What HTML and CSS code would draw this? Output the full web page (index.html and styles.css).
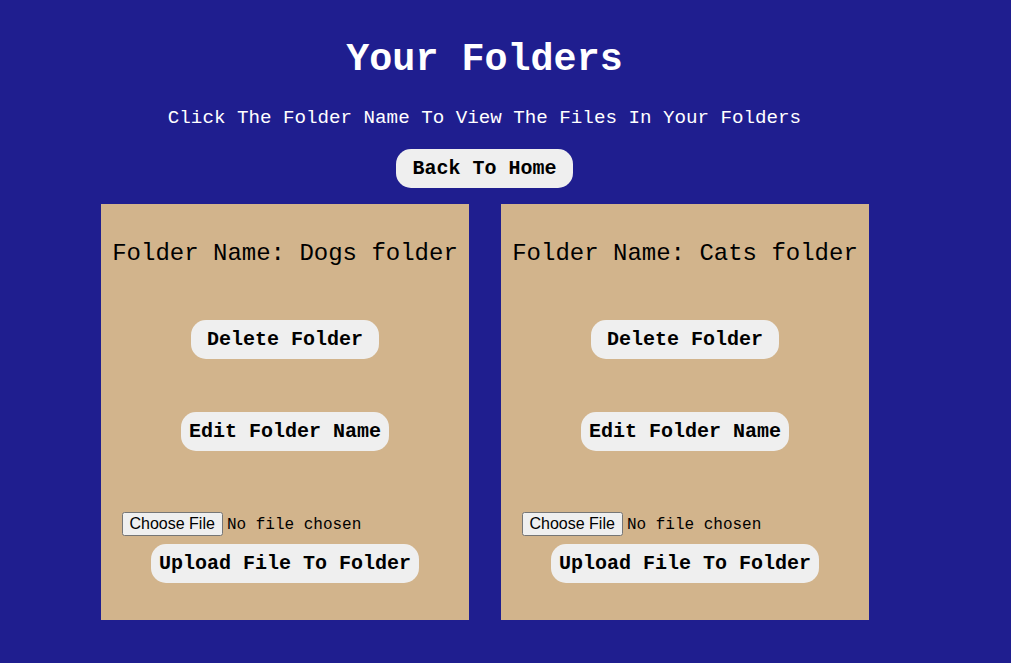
FILE: index.html
```html
<!DOCTYPE html>
<html lang="en">
<head>
<meta charset="utf-8">
<title>Your Folders</title>
<link rel="stylesheet" href="styles.css">
</head>
<body>
<main class="page">
  <header class="header">
    <h1 class="title">Your Folders</h1>
    <p class="subtitle">Click The Folder Name To View The Files In Your Folders</p>
    <button class="btn btn-wide">Back To Home</button>
  </header>
  <section class="folders">
    <div class="card">
      <h2 class="folder-name">Folder Name: Dogs folder</h2>
      <button class="btn btn-wide btn-delete">Delete Folder</button>
      <button class="btn btn-edit">Edit Folder Name</button>
      <div class="upload">
        <input type="file" class="file">
        <button class="btn btn-upload">Upload File To Folder</button>
      </div>
    </div>
    <div class="card">
      <h2 class="folder-name">Folder Name: Cats folder</h2>
      <button class="btn btn-wide btn-delete">Delete Folder</button>
      <button class="btn btn-edit">Edit Folder Name</button>
      <div class="upload">
        <input type="file" class="file">
        <button class="btn btn-upload">Upload File To Folder</button>
      </div>
    </div>
  </section>
</main>
</body>
</html>
```

FILE: styles.css
```css
html, body {
  margin: 0;
  padding: 0;
  background: #1f1e8f;
  font-family: "Liberation Mono", "DejaVu Sans Mono", monospace;
}

.page {
  display: flex;
  flex-direction: column;
  padding-top: 38px;
  min-height: 663px;
  box-sizing: border-box;
}

.header {
  display: flex;
  flex-direction: column;
  align-items: center;
  padding-right: 42px;
}

.title {
  margin: 0;
  font-size: 38.4px;
  font-weight: bold;
  color: #ffffff;
  text-align: center;
}

.subtitle {
  margin: 25px 0 0;
  font-size: 19.2px;
  color: #ffffff;
  text-align: center;
}

.btn {
  font-family: "Liberation Mono", "DejaVu Sans Mono", monospace;
  font-size: 20px;
  font-weight: bold;
  color: #000;
  background: #efefef;
  border: none;
  border-radius: 15px;
  padding: 8px 8px;
  line-height: normal;
  cursor: pointer;
}

.btn-wide {
  padding: 8px 16px;
}

.header .btn {
  margin-top: 20px;
}

.folders {
  display: flex;
  gap: 32px;
  margin-top: 16px;
  padding-left: 101px;
}

.card {
  width: 368px;
  height: 416px;
  box-sizing: border-box;
  background: #d2b48c;
  padding: 36px 12px 0;
  display: flex;
  flex-direction: column;
  align-items: center;
}

.folder-name {
  margin: 0;
  font-size: 24px;
  font-weight: normal;
  color: #000;
  white-space: nowrap;
}

.btn-delete {
  margin-top: 53px;
}

.btn-edit {
  margin-top: 53px;
}

.upload {
  margin-top: 61px;
  display: flex;
  flex-direction: column;
  align-items: center;
}

.file {
  font-family: "Liberation Mono", monospace;
  font-size: 16px;
  color: #000;
}

.file::file-selector-button {
  font-family: "Liberation Sans", Arial, sans-serif;
  font-size: 16px;
}

.btn-upload {
  margin-top: 8px;
}
```
